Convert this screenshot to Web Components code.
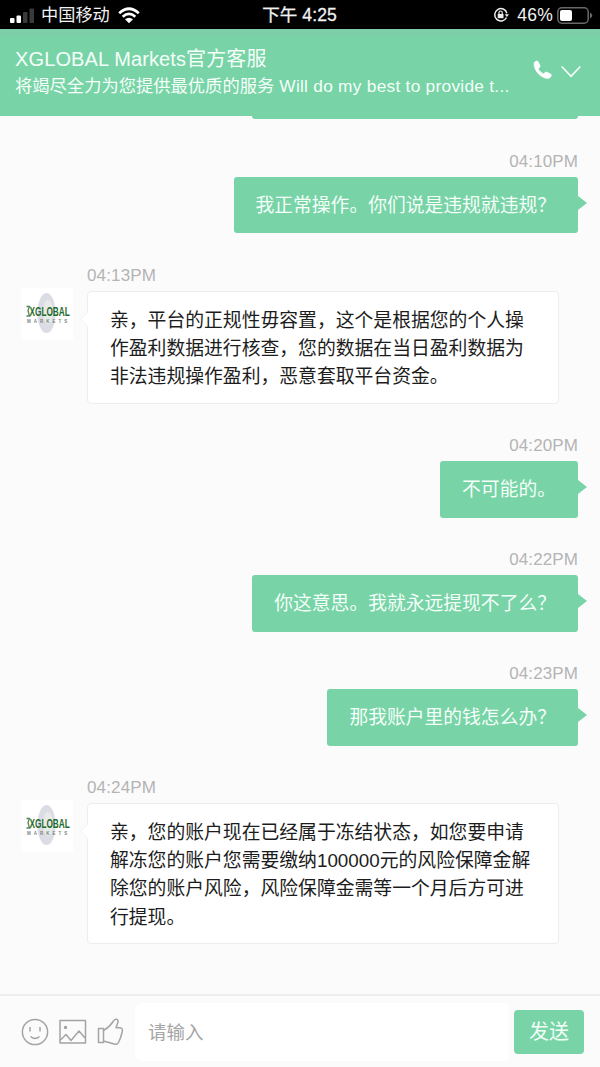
<!DOCTYPE html>
<html lang="zh-CN">
<head>
<meta charset="utf-8">
<title>XGLOBAL Markets官方客服</title>
<style>
html,body{margin:0;height:100%;overflow:hidden}
body{font-family:"Liberation Sans","Noto Sans CJK SC",sans-serif;text-spacing-trim:space-all;--green:#78d3a7}
</style>
</head>
<body>
<chat-app></chat-app>
<script>
const define = (name, html) => {
  const t = document.createElement('template');
  t.innerHTML = html;
  customElements.define(name, class extends HTMLElement {
    constructor() {
      super();
      this.attachShadow({mode: 'open'}).append(t.content.cloneNode(true));
    }
  });
};

define('status-bar', `
<style>
:host{display:grid;grid-template-columns:1fr auto 1fr;align-items:center;height:29px;background:#000;color:#f2f2f2;font-size:17px;line-height:29px;white-space:nowrap;box-sizing:border-box;padding:0 7px 0 9px}
div{display:flex;align-items:center}
.r{justify-content:flex-end}
svg{display:block;flex:none}
.l span{margin:1px 8px 0 6px;font-size:17.2px}
.c{letter-spacing:.1px;font-size:17.5px;-webkit-text-stroke:.3px;padding:1px 3px 0 0}
.r span{margin:1px 4px 0 8px;font-size:17.5px;letter-spacing:.2px}
</style>
<div class="l">
<svg width="26" height="17" viewBox="0 0 26 17"><rect x="1" y="11" width="4.5" height="5" rx="1" fill="#fff"/><rect x="7.5" y="8.5" width="4.5" height="7.5" rx="1" fill="#fff"/><rect x="14" y="5" width="4.5" height="11" rx="1" fill="#3a3a3a"/><rect x="20.500" y="1.500" width="4.500" height="14.500" rx="1" fill="#3a3a3a"/></svg>
<span>中国移动</span>
<svg width="22" height="17" viewBox="0 0 22 17" fill="none" stroke="#fff" stroke-width="2.7"><path d="M1.200 6.200Q11-2.700 20.800 6.200M4.700 9.700Q11 4.200 17.300 9.700"/><path d="M7 12.300Q11 9 15 12.300L11 16.300Z" fill="#fff" stroke="none"/></svg>
</div>
<div class="c">下午 4:25</div>
<div class="r">
<svg width="16" height="16" viewBox="0 0 16 16" fill="none" stroke="#eee" stroke-width="1.500"><path d="M13.500 10.500A6.200 6.200 0 1 1 13.900 6.200"/><path d="M11.600 7.200H16L13.900 10Z" fill="#eee" stroke="none"/><rect x="4.700" y="7" width="5.800" height="4.200" fill="#eee" stroke="none"/><path d="M6 7V5.600a1.600 1.600 0 0 1 3.200 0V7" stroke-width="1.200"/></svg>
<span>46%</span>
<svg width="36" height="17" viewBox="0 0 36 17"><rect x=".8" y=".8" width="30.400" height="15.400" rx="4" fill="none" stroke="#686868" stroke-width="1.500"/><rect x="3" y="3" width="12" height="11" rx="2" fill="#fff"/><path d="M33 5.500q2.200.8 2.200 3t-2.200 3z" fill="#686868"/></svg>
</div>`);

define('chat-header', `
<style>
:host{display:flex;box-sizing:border-box;height:87px;padding:17px 18px 0 15px;background:linear-gradient(#7bcea8 0 7px,var(--green) 8px);color:#f4fff9}
.t{width:497px;white-space:nowrap}
h1{font-weight:400;font-size:20px;line-height:26px;margin:0;letter-spacing:.12px}
p{margin:0;font-size:17.3px;line-height:28px}
p span{letter-spacing:.27px}
.i{display:flex;align-items:flex-start;gap:9px;margin:14px 0 0 21px}
svg{display:block}
</style>
<div class="t"><h1>XGLOBAL Markets官方客服</h1><p>将竭尽全力为您提供最优质的服务<span> Will do my best to provide t...</span></p></div>
<div class="i">
<svg width="19" height="20" viewBox="0 0 19 20"><path d="M1 4.500C.8 2.500 2 1.500 3.300 1.100C4.300.8 5 1.200 5.400 2.100L6.900 5.600C7.300 6.500 7 7.200 6.300 7.800L5.200 8.700C6.300 11.100 8.300 12.900 10.700 13.900L11.700 12.800C12.300 12 13 11.900 13.900 12.200L17.200 13.700C18.200 14.200 18.500 14.800 18.200 15.700C17.600 17.600 16.300 18.600 14.300 18.400C7.500 17.700 1.600 11.200 1 4.500Z" fill="#fff" stroke="#fff" stroke-width=".6"/></svg>
<svg width="20" height="20" viewBox="0 0 20 20" fill="none" stroke="#fff" stroke-width="1.500"><path d="M.7 6.500L10 16.300L19.300 6.500"/></svg>
</div>`);

define('brand-avatar', `
<style>
:host{display:block;width:52px;height:52px;background:#fff}
svg{display:block;overflow:visible}
</style>
<svg width="52" height="52" viewBox="0 0 52 52">
<ellipse cx="25.500" cy="25" rx="9" ry="20" fill="#dcdce5"/>
<ellipse cx="27" cy="24" rx="5" ry="12" fill="#e8ece9"/>
<path d="M5.500 18.500H8.500L7 22.500L8.500 28H5.500" fill="none" stroke="#4c8a55" stroke-width="1.300"/>
<text transform="translate(8.500 28.300) scale(.66 1)" font-family="Liberation Sans,sans-serif" font-weight="700" font-size="12.500" fill="#1f6a2c">XGLOBAL</text>
<text x="6" y="35.300" font-family="Liberation Sans,sans-serif" font-weight="700" font-size="4.500" letter-spacing="3" fill="#7c8581">MARKETS</text>
</svg>`);

define('visitor-message', `
<style>
:host{display:flex;flex-direction:column;align-items:flex-end;margin:0 22px 25.8px 0}
.time{box-sizing:border-box;height:32px;padding-top:1px;line-height:31px;font-size:17px;color:#b4b4b4;letter-spacing:.1px}
.b{position:relative;box-sizing:border-box;padding:15px 22px 13px;line-height:28.2px;font-size:18.8px;background:var(--green);color:#f3fff8;border-radius:3px;white-space:nowrap}
.b::after{content:"";position:absolute;left:100%;top:19px;border:7.500px solid transparent;border-left:9px solid var(--green);border-right:0}
</style>
<div class="time"><slot name="time"></slot></div><div class="b"><slot></slot></div>`);

define('agent-message', `
<style>
:host{display:flex;align-items:flex-start;margin:0 0 25.8px 21px}
brand-avatar{margin-top:29px}
.m{margin-left:14px}
.time{box-sizing:border-box;height:32px;padding-top:1px;line-height:31px;font-size:17px;color:#b4b4b4;letter-spacing:.15px}
.b{position:relative;box-sizing:border-box;width:472px;padding:14.500px 22px 11.500px;border:1px solid #ededed;line-height:28.2px;font-size:18.82px;background:#fff;color:#1c1c1c;border-radius:4px;white-space:nowrap}
.b::before{content:"";position:absolute;left:-6px;top:22px;width:10px;height:10px;background:#fff;border:solid #f4f4f4;border-width:0 0 1px 1px;transform:rotate(45deg)}
</style>
<brand-avatar></brand-avatar>
<div class="m"><div class="time"><slot name="time"></slot></div><div class="b"><slot></slot></div></div>`);

define('chat-composer', `
<style>
:host{display:flex;align-items:center;box-sizing:border-box;height:73px;border-top:2px solid #eeeeee;background:#fbfbfb;padding:0 16px 0 21px}
.i{display:flex;gap:10px;align-items:center}
svg{display:block;fill:none;stroke:#a4a4a4;stroke-width:1.500;stroke-linejoin:round}
.in{width:374px;height:58px;box-sizing:border-box;margin:0 5px 0 10px;padding-left:13px;background:#fff;border-radius:6px;line-height:60px;font-size:18.500px;color:#a5a5a5}
button{width:70px;height:44px;padding:0;border:0;border-radius:4px;background:var(--green);color:#f1fff7;font:inherit;font-size:20px;line-height:44px}
</style>
<div class="i">
<svg width="28" height="28" viewBox="0 0 28 28"><circle cx="14" cy="14" r="12.600"/><path d="M9 9v4.500M19 9v4.500M9.500 18.500Q14 22.500 18.500 18.500"/></svg>
<svg width="28" height="28" viewBox="0 0 28 28"><rect x="1" y="2.500" width="25.500" height="22.500"/><path d="M1.500 22L7 16.500L12 22.500L20 13L26 20"/><circle cx="6.500" cy="9.500" r="1" fill="#a4a4a4"/></svg>
<svg width="28" height="28" viewBox="0 0 28 28"><path d="M1.500 10.500H6.500V24.500H1.500ZM6.500 12.500C11 10 14 7 16.500 3C18 .3 21.500.8 21 4L19 9.800H23C25 10 25.800 11.500 25.300 13.500C24.300 18 23.500 21 21.500 24.500C20.800 26 20 26.500 18 26.300L6.500 23"/></svg>
</div>
<div class="in">请输入</div><button>发送</button>`);

define('chat-app', `
<style>
:host{display:flex;flex-direction:column;width:600px;height:1067px;background:#fbfbfb}
main{flex:1;min-height:0;overflow:hidden}
.prev{height:3px;width:326px;margin:0 22px 26px auto;background:var(--green);border-radius:0 0 3px 3px}
</style>
<status-bar></status-bar>
<chat-header></chat-header>
<main>
<div class="prev"></div>
<visitor-message><span slot="time">04:10PM</span>我正常操作。你们说是违规就违规？</visitor-message>
<agent-message><span slot="time">04:13PM</span>亲，平台的正规性毋容置，这个是根据您的个人操<br>作盈利数据进行核查，您的数据在当日盈利数据为<br>非法违规操作盈利，恶意套取平台资金。</agent-message>
<visitor-message><span slot="time">04:20PM</span>不可能的。</visitor-message>
<visitor-message><span slot="time">04:22PM</span>你这意思。我就永远提现不了么？</visitor-message>
<visitor-message><span slot="time">04:23PM</span>那我账户里的钱怎么办？</visitor-message>
<agent-message><span slot="time">04:24PM</span>亲，您的账户现在已经属于冻结状态，如您要申请<br>解冻您的账户您需要缴纳100000元的风险保障金解<br>除您的账户风险，风险保障金需等一个月后方可进<br>行提现。</agent-message>
</main>
<chat-composer></chat-composer>`);
</script>
</body>
</html>
